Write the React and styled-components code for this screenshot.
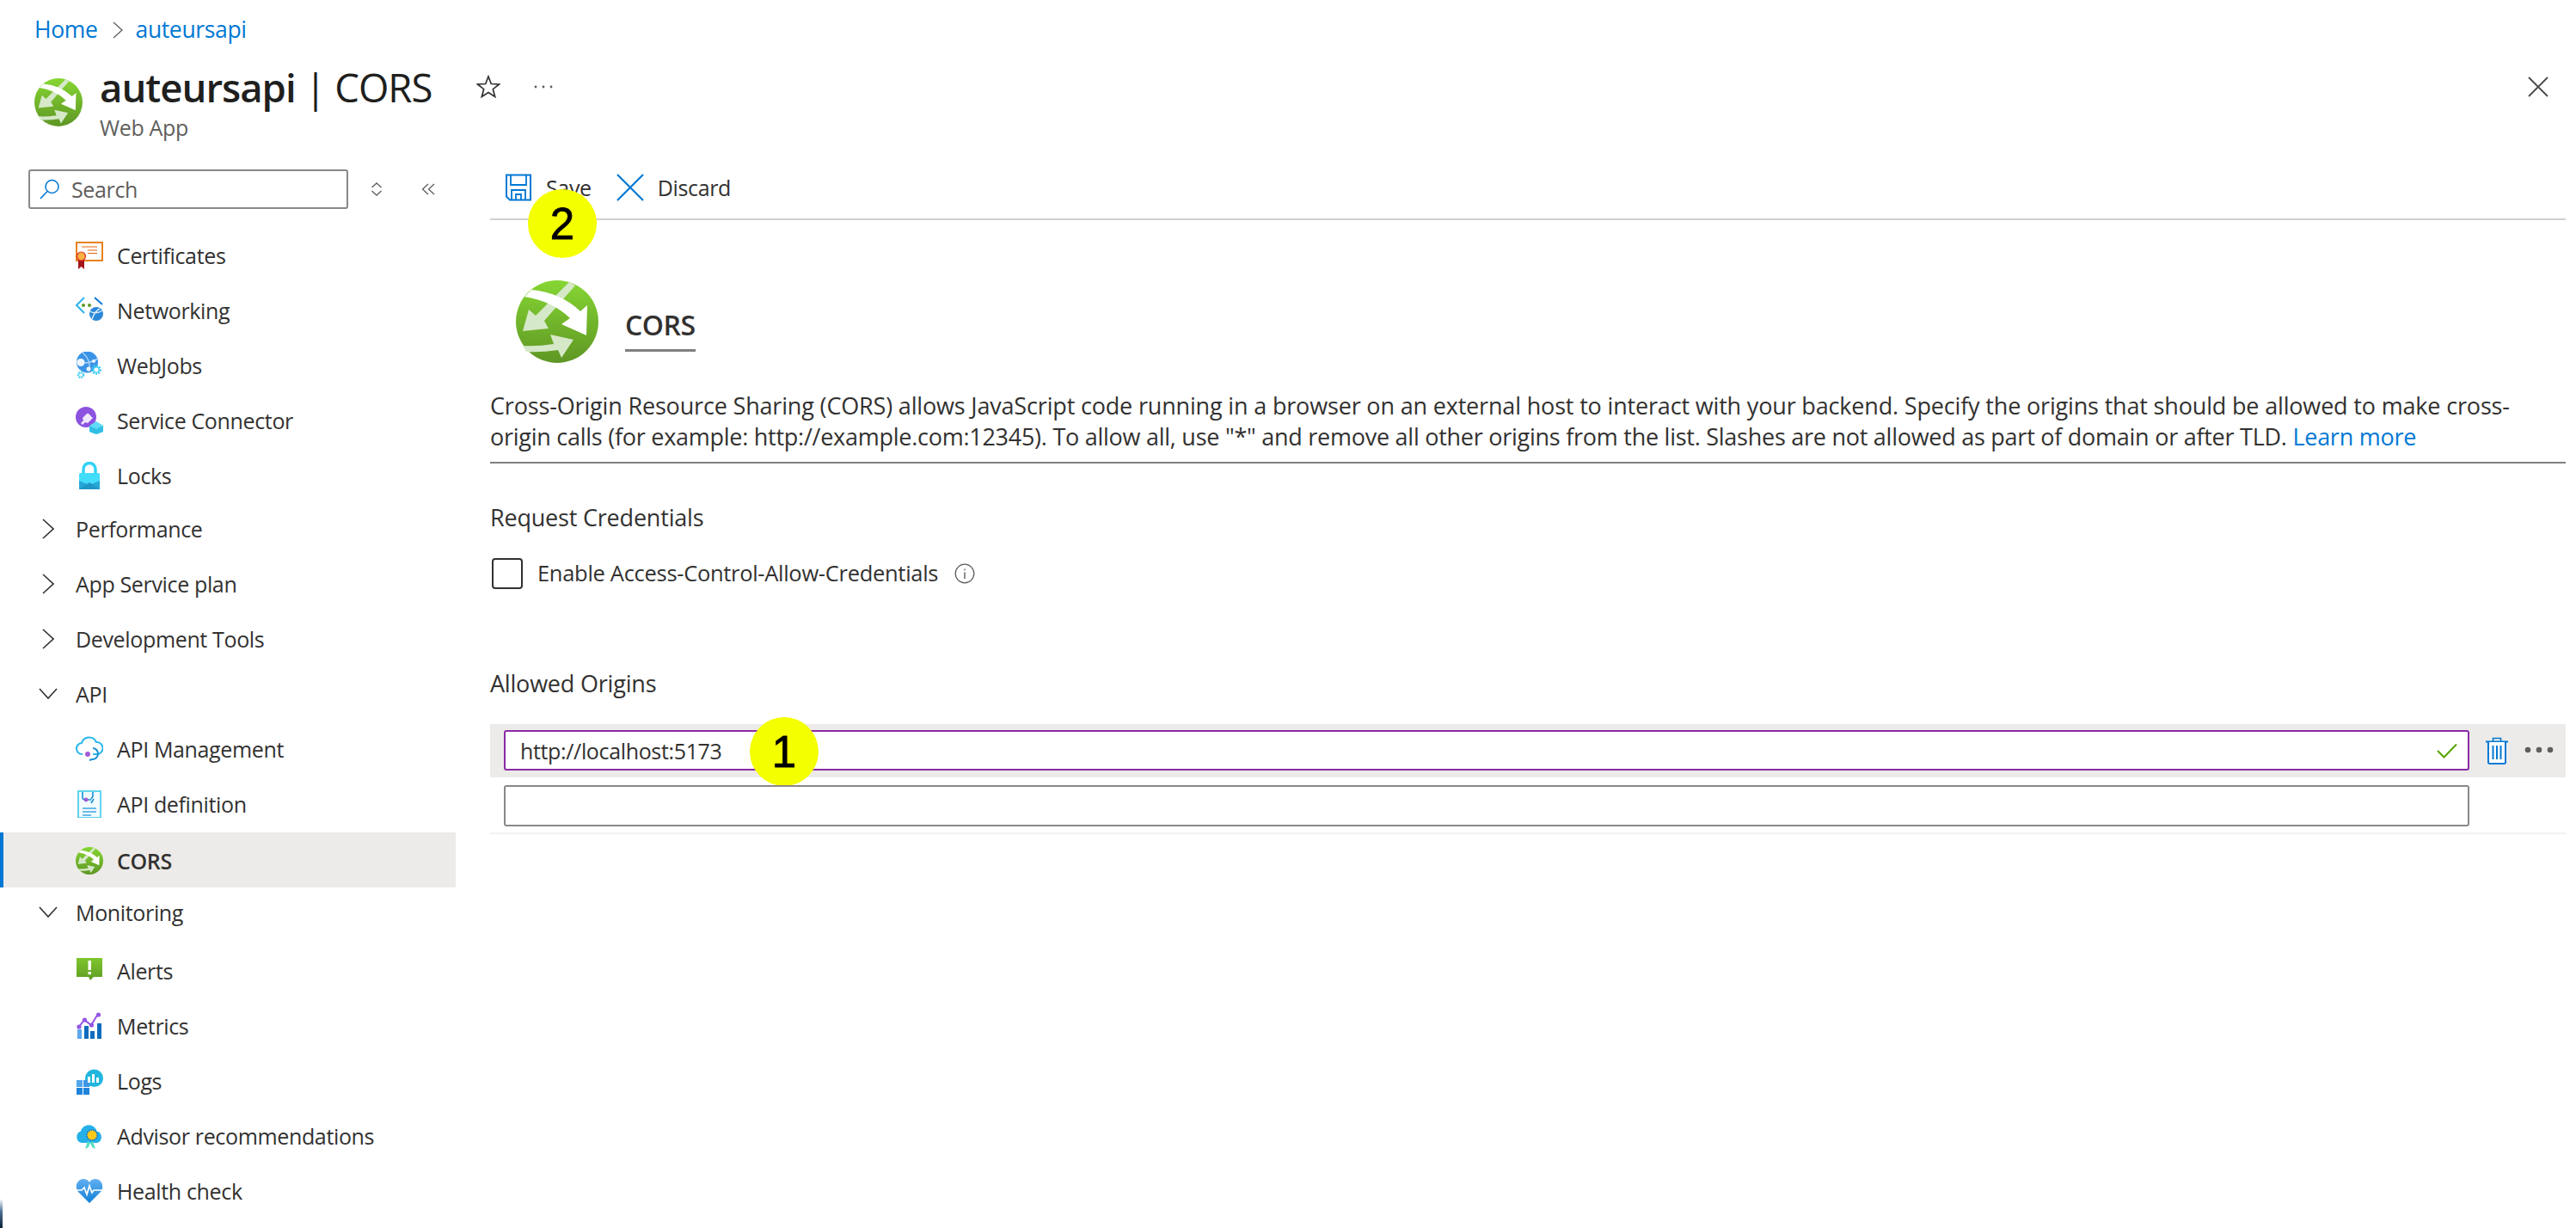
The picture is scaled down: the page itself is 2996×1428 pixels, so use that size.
import React from "react";
import styled, { createGlobalStyle } from "styled-components";

const GlobalStyle = createGlobalStyle`
  html, body {
    margin: 0;
    padding: 0;
    background: #fff;
  }
  * {
    box-sizing: border-box;
  }
`;

const Page = styled.div`
  position: relative;
  width: 2996px;
  height: 1428px;
  overflow: hidden;
  background: #fff;
  color: #323130;
  font-family: "Open Sans", "Noto Sans", sans-serif;
  font-size: 25px;
  letter-spacing: -0.35px;
`;

const Corner = styled.div`
  position: absolute;
  left: 0;
  bottom: 0;
  width: 3px;
  height: 34px;
  background: linear-gradient(#ffffff, #4b6f94 45%, #0d2238);
  border-top-right-radius: 3px;
`;

const Breadcrumb = styled.nav`
  height: 71px;
  display: flex;
  align-items: center;
  padding: 0 0 3px 40px;
  color: #0078d4;
  font-size: 26.5px;
`;

const Crumb = styled.span`
  line-height: 34px;
`;

const Sep = styled.svg`
  width: 12px;
  height: 20px;
  margin: 2px 15px 0 17px;
`;

const TitleRow = styled.header`
  display: flex;
  align-items: center;
  height: 95px;
  padding: 0 32px 0 40px;
`;

const TitleCol = styled.div`
  flex: 1;
  margin-left: 20px;
`;

const TitleLine = styled.div`
  display: flex;
  align-items: center;
  height: 61px;
  padding-bottom: 2px;
`;

const Title = styled.h1`
  margin: 0;
  font-size: 45.5px;
  font-weight: 400;
  line-height: 58px;
  letter-spacing: -1px;
  color: #201f1e;
  white-space: nowrap;
`;

const TitleName = styled.span`
  font-weight: 600;
`;

const Star = styled.svg`
  width: 28px;
  height: 27px;
  margin-left: 52px;
`;

const More = styled.svg`
  width: 22px;
  height: 4px;
  margin-left: 39px;
`;

const Close = styled.svg`
  width: 24px;
  height: 24px;
  margin-left: auto;
`;

const Subtitle = styled.div`
  line-height: 32px;
  padding-bottom: 2px;
  color: #605e5c;
`;

const Body = styled.div`
  display: flex;
`;

const Sidebar = styled.aside`
  width: 530px;
  flex: none;
`;

const SearchRow = styled.div`
  display: flex;
  align-items: center;
  margin: 31px 0 23px;
  padding-left: 33px;
`;

const SearchBox = styled.div`
  width: 372px;
  height: 46px;
  display: flex;
  align-items: center;
  gap: 13px;
  padding-left: 11px;
  border: 2px solid #8a8886;
  border-radius: 3px;
  color: #605e5c;
`;

const SortIcon = styled.svg`
  width: 14px;
  height: 16px;
  margin-left: 26px;
`;

const CollapseIcon = styled.svg`
  width: 16px;
  height: 14px;
  margin-left: 45px;
`;

const ChildList = styled.div`
  margin-top: ${({ $offset }) => $offset || 0}px;
`;

const NavItem = styled.div`
  position: relative;
  height: 64px;
  display: flex;
  align-items: center;
  gap: 16px;
  padding-left: 88px;
  padding-top: ${({ $active }) => ($active ? 1 : 0)}px;
  padding-bottom: ${({ $active }) => ($active ? 0 : 2)}px;
  background: ${({ $active }) => ($active ? "#edebe9" : "transparent")};
  font-weight: ${({ $active }) => ($active ? 600 : 400)};
  white-space: nowrap;
  &::before {
    content: "";
    display: ${({ $active }) => ($active ? "block" : "none")};
    position: absolute;
    left: 0;
    top: 0;
    bottom: 0;
    width: 4px;
    background: #0078d4;
  }
`;

const NavIcon = styled.svg`
  width: 32px;
  height: 32px;
  flex: none;
`;

const GroupRow = styled.div`
  height: 64px;
  display: flex;
  align-items: center;
  padding-bottom: 7px;
  white-space: nowrap;
`;

const GroupChevron = styled.span`
  width: 88px;
  flex: none;
  display: flex;
  padding-left: ${({ $open }) => ($open ? 45 : 49)}px;
`;

const ChevronSvg = styled.svg`
  width: ${({ $open }) => ($open ? 22 : 14)}px;
  height: ${({ $open }) => ($open ? 14 : 24)}px;
`;

const Main = styled.main`
  width: 2414px;
  margin-left: 40px;
`;

const Toolbar = styled.div`
  height: 90px;
  display: flex;
  align-items: flex-start;
  gap: 29px;
  padding: 36px 0 0 17px;
  border-bottom: 2px solid #d2d0ce;
`;

const ToolButton = styled.div`
  position: relative;
  display: flex;
  align-items: center;
  gap: 16px;
  height: 31px;
`;

const ToolIcon = styled.svg`
  width: 32px;
  height: 32px;
  flex: none;
`;

const Badge = styled.div`
  position: absolute;
  left: ${({ $left }) => $left}px;
  top: ${({ $top }) => $top}px;
  width: 80px;
  height: 80px;
  border-radius: 50%;
  background: #f4ff00;
  color: #000;
  display: flex;
  align-items: center;
  justify-content: center;
  font-family: "Liberation Sans", Arial, sans-serif;
  font-size: 51px;
  letter-spacing: 0;
  line-height: 1;
  -webkit-text-stroke: 0.8px #000;
`;

const BladeHead = styled.div`
  display: flex;
  align-items: flex-end;
  gap: 31px;
  margin-top: 70px;
  padding-left: 30px;
`;

const BladeTitle = styled.h2`
  margin: 0 0 13px;
  font-size: 32px;
  font-weight: 600;
  line-height: 40px;
  letter-spacing: -0.5px;
  padding-bottom: 8px;
  border-bottom: 3px solid #7f7f7f;
`;

const Description = styled.div`
  margin-top: 32px;
  padding-bottom: 11px;
  font-size: 27px;
  line-height: 36px;
  white-space: nowrap;
  border-bottom: 2px solid #808080;
`;

const DescriptionLine = styled.div`
  letter-spacing: ${({ $tight }) => ($tight ? -0.26 : -0.17)}px;
`;

const LearnMore = styled.span`
  color: #0078d4;
`;

const SectionLabel = styled.div`
  margin-top: ${({ $top }) => $top}px;
  font-size: 27px;
  letter-spacing: -0.2px;
  line-height: 36px;
`;

const CheckRow = styled.div`
  display: flex;
  align-items: center;
  margin-top: 29px;
  height: 36px;
`;

const CheckBox = styled.div`
  width: 36px;
  height: 36px;
  margin-left: 2px;
  border: 2px solid #323130;
  border-radius: 4px;
`;

const CheckLabel = styled.span`
  margin-left: 17px;
  padding-bottom: 3px;
  font-size: 25.5px;
  letter-spacing: -0.3px;
`;

const InfoIcon = styled.svg`
  width: 24px;
  height: 24px;
  margin-left: 19px;
`;

const OriginRow = styled.div`
  display: flex;
  align-items: flex-start;
  height: ${({ $filled }) => ($filled ? 62 : 66)}px;
  margin-top: ${({ $filled }) => ($filled ? 29 : 0)}px;
  padding: ${({ $filled }) => ($filled ? 7 : 9)}px 0 0 16px;
  background: ${({ $filled }) => ($filled ? "#edebe9" : "transparent")};
  border-bottom: ${({ $filled }) => ($filled ? "none" : "2px solid #f3f2f1")};
`;

const OriginInput = styled.div`
  position: relative;
  width: 2286px;
  height: ${({ $filled }) => ($filled ? 47 : 48)}px;
  display: flex;
  align-items: center;
  padding: 0 12px 0 17px;
  background: #fff;
  border: 2px solid ${({ $filled }) => ($filled ? "#8a2aa5" : "#8a8886")};
  border-radius: 3px;
`;

const CheckMark = styled.svg`
  width: 24px;
  height: 18px;
  margin-left: auto;
`;

const TrashIcon = styled.svg`
  width: 28px;
  height: 32px;
  margin: 8px 0 0 18px;
`;

const RowMore = styled.svg`
  width: 34px;
  height: 8px;
  margin: 19px 0 0 18px;
`;

// the web app logo, also used for the CORS blade header
const CorsLogo = ({ id, ...props }) => (
  <svg viewBox="0 0 96 96" {...props}>
    <defs>
      <linearGradient id={id} x1="0" y1="0" x2="0" y2="1">
        <stop offset="0" stopColor="#86d633" />
        <stop offset="1" stopColor="#5e9624" />
      </linearGradient>
    </defs>
    <circle cx="48" cy="48" r="48" fill={`url(#${id})`} />
    <path d="M62 2 L69 6 L33 47 L38 56 L8 59 L15 34 L23 41 Z" fill="#d5e8c8" />
    <path d="M8 76 Q25 77 44 74 L40 63 L67 69 L53 90 L49 81 Q30 84 12 83 Z" fill="#d5e8c8" />
    <path d="M18 11 Q52 14 75 36 L83 29 L82 64 L53 51 L63 44 Q42 24 10 19 Z" fill="#fff" />
  </svg>
);

const CertificateIcon = () => (
  <NavIcon viewBox="0 0 32 32">
    <rect x="1" y="1" width="30" height="21" fill="#fff" stroke="#e8821e" strokeWidth="2" />
    <path d="M7 6h18M14 10h11M14 13.500h11" stroke="#e0650f" strokeWidth="1.200" />
    <path d="M3 19h7v13l-3.500-3-3.500 3z" fill="#a4161a" />
    <circle cx="6.500" cy="17" r="5" fill="#fbb040" stroke="#e0342b" strokeWidth="1.200" />
  </NavIcon>
);

const NetworkingIcon = () => (
  <NavIcon viewBox="0 0 32 32">
    <path d="M10 1 L1 10 L10 19" fill="none" stroke="#2bb4f0" strokeWidth="2" />
    <path d="M22 1 L31 9" fill="none" stroke="#0f78d4" strokeWidth="2" />
    <circle cx="9" cy="10" r="2" fill="#5e9624" />
    <circle cx="16" cy="10" r="2" fill="#5e9624" />
    <circle cx="24" cy="20" r="8" fill="#2b88d8" />
    <path d="M16.500 17q7 4 15-1M19 26q3-9 9-12" fill="none" stroke="#d8ecfb" strokeWidth="1.400" />
  </NavIcon>
);

const Gear = ({ cx, cy, r }) => (
  <g>
    <circle cx={cx} cy={cy} r={r * 1.5} fill="none" stroke="#38cbf0" strokeWidth={r * 0.7} strokeDasharray="1.800 1.400" />
    <circle cx={cx} cy={cy} r={r} fill="#fff" stroke="#38cbf0" strokeWidth={r * 0.4} />
  </g>
);

const WebJobsIcon = () => (
  <NavIcon viewBox="0 0 32 32">
    <circle cx="13.500" cy="12" r="12.500" fill="#3a93e6" />
    <path d="M1 11q12 5 25-3M8 1q10 8 8 22" fill="none" stroke="#a9d2f5" strokeWidth="1.500" />
    <circle cx="6" cy="12.500" r="4.500" fill="#eef5fc" />
    <circle cx="15" cy="20" r="2.500" fill="#eef5fc" />
    <circle cx="21" cy="11" r="2" fill="#eef5fc" />
    <Gear cx={24} cy={21} r={3.200} />
    <Gear cx={6} cy={27} r={2.300} />
  </NavIcon>
);

const ConnectorIcon = () => (
  <NavIcon viewBox="0 0 32 32">
    <circle cx="12" cy="12" r="12" fill="#8c52e0" />
    <path d="M6 19l3-3 -1-3 6-6 6 6-6 6-3-1-3 3z" fill="#f1e7fb" />
    <path d="M14 4v4M19 8v4" stroke="#8c52e0" strokeWidth="1.500" />
    <path d="M16 22l8-5 8 5v7l-8 3-8-3z" fill="#5fdcf6" />
    <path d="M16 22l8 4 8-4v7l-8 3-8-3z" fill="#32bfe6" />
  </NavIcon>
);

const LockIcon = () => (
  <NavIcon viewBox="0 0 32 32">
    <path d="M9 15V8.500a7 7 0 0 1 14 0V15" fill="none" stroke="#2fd2f5" strokeWidth="3.400" />
    <rect x="4" y="13" width="24" height="19" rx="1.500" fill="#44dcfb" />
    <path d="M4 32V22l12 5 12-5v10z" fill="#26a8d8" />
    <path d="M4 32l12-8 12 8z" fill="#1f96c6" />
  </NavIcon>
);

const ApiCloudIcon = () => (
  <NavIcon viewBox="0 0 32 32">
    <path d="M8 22a6.500 6.500 0 0 1-1-13 9 9 0 0 1 17-1 6.800 6.800 0 0 1 1 14h-5" fill="none" stroke="#2cb7ea" strokeWidth="2" />
    <path d="M20 15a6.500 6.500 0 0 1-1 13l-3 1" fill="none" stroke="#1790d4" strokeWidth="2" />
    <circle cx="14" cy="22" r="3" fill="#a35bd6" />
  </NavIcon>
);

const ApiDefIcon = () => (
  <NavIcon viewBox="0 0 32 32">
    <rect x="3" y="1" width="26" height="31" fill="#f2fbfe" stroke="#3ccbea" strokeWidth="1.600" />
    <path d="M8 2v6a3 3 0 0 0 3 3h7M20 2v5l-2 3M21 10l-3 5" fill="none" stroke="#1790d4" strokeWidth="1.600" />
    <circle cx="12" cy="11" r="2.400" fill="#a35bd6" />
    <path d="M8 21h16M8 25h16M8 29h10" stroke="#3ca7e0" strokeWidth="1.400" />
  </NavIcon>
);

const AlertIcon = () => (
  <NavIcon viewBox="0 0 32 32">
    <defs>
      <linearGradient id="alertFill" x1="0" y1="0" x2="0" y2="1">
        <stop offset="0" stopColor="#7fc62e" />
        <stop offset="1" stopColor="#5e9c22" />
      </linearGradient>
    </defs>
    <path d="M1 1h30v22H21l-4 4-2-4H1z" fill="url(#alertFill)" />
    <rect x="14.500" y="4" width="3.400" height="11" fill="#fff" />
    <rect x="14.500" y="17" width="3.400" height="3.200" fill="#fff" />
  </NavIcon>
);

const MetricsIcon = () => (
  <NavIcon viewBox="0 0 32 32">
    <rect x="2" y="20" width="5" height="11" fill="#5ea9ef" />
    <rect x="10" y="16" width="5" height="15" fill="#0f6cbd" />
    <rect x="17" y="22" width="5" height="9" fill="#0f6cbd" />
    <rect x="25" y="13" width="5" height="18" fill="#0f6cbd" />
    <path d="M4 17l6-8 8 6 8-13" fill="none" stroke="#9455e6" strokeWidth="2" />
    <circle cx="4" cy="17" r="2.600" fill="#9455e6" />
    <circle cx="10.500" cy="9" r="2.600" fill="#9455e6" />
    <circle cx="18.500" cy="15" r="2.600" fill="#9455e6" />
    <circle cx="26.500" cy="3" r="2.600" fill="#9455e6" />
  </NavIcon>
);

const LogsIcon = () => (
  <NavIcon viewBox="0 0 32 32">
    <path d="M11 13a10 10 0 0 1 21 0 10 10 0 0 1-14 9l-7 1z" fill="#21b6dd" />
    <rect x="1" y="15" width="7" height="8" fill="#52a6ec" />
    <rect x="9" y="15" width="7" height="8" fill="#3d97e4" />
    <rect x="1" y="24" width="7" height="8" fill="#1f84db" />
    <rect x="9" y="24" width="7" height="8" fill="#1f84db" />
    <path d="M14 11h3v7h-3zM19 8h3v10h-3zM24 12h3v6h-3z" fill="#fff" />
  </NavIcon>
);

const AdvisorIcon = () => (
  <NavIcon viewBox="0 0 32 32">
    <path d="M7 24a7 7 0 0 1-1-13.500 9.500 9.500 0 0 1 18.500 0A7 7 0 0 1 25 24z" fill="#25b0ea" />
    <path d="M14 22l-3 9 4-2 2-5zM20 22l3 9-4-2-2-5z" fill="#57dfc4" />
    <circle cx="19" cy="15" r="6" fill="#ffc91a" stroke="#0f6cbd" strokeWidth="1.400" strokeDasharray="1.600 1" />
  </NavIcon>
);

const HealthIcon = () => (
  <NavIcon viewBox="0 0 32 32">
    <defs>
      <linearGradient id="heartFill" x1="0" y1="0" x2="0" y2="1">
        <stop offset="0" stopColor="#62b0f0" />
        <stop offset="1" stopColor="#0f7fd8" />
      </linearGradient>
    </defs>
    <path d="M16 30L3 17C-2 11 2 2 9 2c3 0 5.500 1 7 4 1.500-3 4-4 7-4 7 0 11 9 6 15z" fill="url(#heartFill)" />
    <path d="M1 15h6l3-3 3 8 3-10 3 8 2-3h10" fill="none" stroke="#fff" strokeWidth="1.700" />
  </NavIcon>
);

const Chevron = ({ open }) => (
  <ChevronSvg $open={open} viewBox={open ? "0 0 22 14" : "0 0 14 24"}>
    <path d={open ? "M1 1 L11 12 L21 1" : "M1 1 L13 12 L1 23"} fill="none" stroke="#323130" strokeWidth="1.600" />
  </ChevronSvg>
);

const NavLink = ({ icon: Icon, label, active }) => (
  <NavItem $active={active}>
    {Icon === "cors" ? <NavIcon as={CorsLogo} id="navLogo" /> : <Icon />}
    {label}
  </NavItem>
);

const Group = ({ label, open }) => (
  <GroupRow>
    <GroupChevron $open={open}>
      <Chevron open={open} />
    </GroupChevron>
    {label}
  </GroupRow>
);

const SearchGlass = () => (
  <svg width="24" height="24" viewBox="0 0 24 24" style={{ flex: "none" }}>
    <circle cx="14.500" cy="9" r="7.500" fill="none" stroke="#0078d4" strokeWidth="1.500" />
    <path d="M9 14.500 L1 23" stroke="#0078d4" strokeWidth="1.600" />
  </svg>
);

const App = () => (
  <Page>
    <GlobalStyle />
    <Breadcrumb>
      <Crumb>Home</Crumb>
      <Sep viewBox="0 0 12 20">
        <path d="M1 1 L11 10 L1 19" fill="none" stroke="#605e5c" strokeWidth="1.300" />
      </Sep>
      <Crumb>auteursapi</Crumb>
    </Breadcrumb>

    <TitleRow>
      <CorsLogo id="titleLogo" width="56" height="56" />
      <TitleCol>
        <TitleLine>
          <Title>
            <TitleName>auteursapi</TitleName> | CORS
          </Title>
          <Star viewBox="0 0 28 27">
            <path d="M14 2 L17.300 10.500 L26.500 11 L19.300 16.700 L21.700 25.500 L14 20.500 L6.300 25.500 L8.700 16.700 L1.500 11 L10.700 10.500 Z" fill="none" stroke="#323130" strokeWidth="1.700" />
          </Star>
          <More viewBox="0 0 22 4">
            <circle cx="2" cy="2" r="1.400" fill="#605e5c" />
            <circle cx="11" cy="2" r="1.400" fill="#605e5c" />
            <circle cx="20" cy="2" r="1.400" fill="#605e5c" />
          </More>
          <Close viewBox="0 0 24 24">
            <path d="M1 1 L23 23 M23 1 L1 23" stroke="#4a4a4a" strokeWidth="1.800" />
          </Close>
        </TitleLine>
        <Subtitle>Web App</Subtitle>
      </TitleCol>
    </TitleRow>

    <Body>
      <Sidebar>
        <SearchRow>
          <SearchBox>
            <SearchGlass />
            Search
          </SearchBox>
          <SortIcon viewBox="0 0 14 16">
            <path d="M1.500 6 L7 1 L12.500 6 M1.500 10 L7 15 L12.500 10" fill="none" stroke="#605e5c" strokeWidth="1.300" />
          </SortIcon>
          <CollapseIcon viewBox="0 0 16 14">
            <path d="M8 1 L1.500 7 L8 13 M15 1 L8.500 7 L15 13" fill="none" stroke="#605e5c" strokeWidth="1.300" />
          </CollapseIcon>
        </SearchRow>

        <NavLink icon={CertificateIcon} label="Certificates" />
        <NavLink icon={NetworkingIcon} label="Networking" />
        <NavLink icon={WebJobsIcon} label="WebJobs" />
        <NavLink icon={ConnectorIcon} label="Service Connector" />
        <NavLink icon={LockIcon} label="Locks" />
        <Group label="Performance" />
        <Group label="App Service plan" />
        <Group label="Development Tools" />
        <Group label="API" open />
        <ChildList $offset={-2}>
          <NavLink icon={ApiCloudIcon} label="API Management" />
          <NavLink icon={ApiDefIcon} label="API definition" />
          <NavLink icon="cors" label="CORS" active />
        </ChildList>
        <Group label="Monitoring" open />
        <ChildList $offset={2}>
          <NavLink icon={AlertIcon} label="Alerts" />
          <NavLink icon={MetricsIcon} label="Metrics" />
          <NavLink icon={LogsIcon} label="Logs" />
          <NavLink icon={AdvisorIcon} label="Advisor recommendations" />
          <NavLink icon={HealthIcon} label="Health check" />
        </ChildList>
      </Sidebar>

      <Main>
        <Toolbar>
          <ToolButton>
            <ToolIcon viewBox="0 0 32 32">
              <path d="M2 1.500h28v29H6l-4-4z" fill="#fff" stroke="#0078d4" strokeWidth="2" />
              <path d="M7 2v11h18V2M8 30V19h16v11M13 30v-6h6v6" fill="none" stroke="#0078d4" strokeWidth="1.800" />
            </ToolIcon>
            Save
            <Badge $left={27} $top={18}>2</Badge>
          </ToolButton>
          <ToolButton>
            <ToolIcon viewBox="0 0 32 32">
              <path d="M1 1 L31 31 M31 1 L1 31" stroke="#0078d4" strokeWidth="2.200" />
            </ToolIcon>
            Discard
          </ToolButton>
        </Toolbar>

        <BladeHead>
          <CorsLogo id="bladeLogo" width="96" height="96" />
          <BladeTitle>CORS</BladeTitle>
        </BladeHead>

        <Description>
          <DescriptionLine>
            Cross-Origin Resource Sharing (CORS) allows JavaScript code running in a browser on an external host to interact with your backend. Specify the origins that should be allowed to make cross-
          </DescriptionLine>
          <DescriptionLine $tight>
            origin calls (for example: http://example.com:12345). To allow all, use "*" and remove all other origins from the list. Slashes are not allowed as part of domain or after TLD. <LearnMore>Learn more</LearnMore>
          </DescriptionLine>
        </Description>

        <SectionLabel $top={45}>Request Credentials</SectionLabel>
        <CheckRow>
          <CheckBox />
          <CheckLabel>Enable Access-Control-Allow-Credentials</CheckLabel>
          <InfoIcon viewBox="0 0 24 24">
            <circle cx="12" cy="12" r="10.800" fill="none" stroke="#605e5c" strokeWidth="1.300" />
            <path d="M12 10.500v7.500M12 6.500v1.800" stroke="#605e5c" strokeWidth="1.400" />
          </InfoIcon>
        </CheckRow>

        <SectionLabel $top={92}>Allowed Origins</SectionLabel>
        <OriginRow $filled>
          <OriginInput $filled>
            http://localhost:5173
            <Badge $left={284} $top={-17}>1</Badge>
            <CheckMark viewBox="0 0 24 18">
              <path d="M1 9 L8.500 16.500 L23 1.500" fill="none" stroke="#57a300" strokeWidth="2" />
            </CheckMark>
          </OriginInput>
          <TrashIcon viewBox="0 0 28 32">
            <path d="M1 5.500h26" stroke="#0078d4" strokeWidth="2" />
            <path d="M9.500 5V1.500h9V5" fill="none" stroke="#0078d4" strokeWidth="1.600" />
            <path d="M4 6v23.500a1.500 1.500 0 0 0 1.500 1.500h17a1.500 1.500 0 0 0 1.500-1.500V6" fill="#fff" stroke="#0078d4" strokeWidth="2" />
            <path d="M9.500 10v16M14 10v16M18.500 10v16" stroke="#0078d4" strokeWidth="2" />
          </TrashIcon>
          <RowMore viewBox="0 0 34 8">
            <circle cx="4" cy="4" r="3.300" fill="#605e5c" />
            <circle cx="17" cy="4" r="3.300" fill="#605e5c" />
            <circle cx="30" cy="4" r="3.300" fill="#605e5c" />
          </RowMore>
        </OriginRow>
        <OriginRow>
          <OriginInput />
        </OriginRow>
      </Main>
    </Body>
    <Corner />
  </Page>
);

export default App;
